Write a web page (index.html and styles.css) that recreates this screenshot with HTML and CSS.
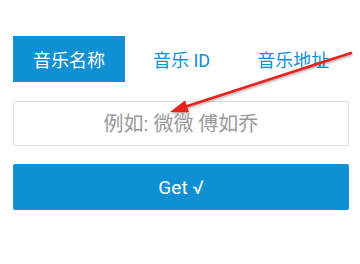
FILE: index.html
```html
<!DOCTYPE html>
<html lang="zh-CN">
<head>
    <meta charset="UTF-8">
    <meta name="viewport" content="width=device-width, initial-scale=1.0">
    <title>音乐搜索</title>
    <link rel="stylesheet" href="styles.css">
</head>
<body>
<div class="panel">
    <ul class="tabs">
        <li class="active">音乐名称</li>
        <li>音乐 ID</li>
        <li>音乐地址</li>
    </ul>
    <input class="field" type="text" placeholder="例如: 微微 傅如乔">
    <button class="get">Get √</button>
</div>

<svg class="arrow" width="360" height="264" viewBox="0 0 360 264">
    <defs>
        <filter id="shade" x="-10%" y="-10%" width="120%" height="130%">
            <feDropShadow dx="0" dy="1.5" stdDeviation="1" flood-color="#000" flood-opacity="0.35"/>
        </filter>
    </defs>
    <g filter="url(#shade)">
        <line x1="351" y1="53" x2="186" y2="106.5" stroke="#e8211b" stroke-width="2.5" stroke-linecap="round"/>
        <polygon points="170,112 185,100.5 189,112.3" fill="#e8211b"/>
    </g>
</svg>
</body>
</html>
```

FILE: styles.css
```css
* {
    margin: 0;
    padding: 0;
    box-sizing: border-box;
}

body {
    background: #fff;
    font-family: Roboto, "Noto Sans CJK SC", sans-serif;
    width: 360px;
    height: 264px;
    overflow: hidden;
}

.panel {
    padding: 36px 12px 0 13px;
}

.tabs {
    list-style: none;
    display: flex;
    height: 46px;
    margin-bottom: 19px;
}

.tabs li {
    display: flex;
    align-items: center;
    flex-shrink: 0;
    white-space: nowrap;
    padding: 0 20px;
    margin-right: 7px;
    font-size: 18px;
    color: #0e90d2;
}

.tabs li.active {
    background: #0e90d2;
    color: #fff;
    width: 112px;
    justify-content: center;
    padding: 0;
    margin-right: 8px;
}

.field {
    display: block;
    width: 336px;
    height: 45px;
    border: 1px solid #ddd;
    border-radius: 2px;
    text-align: center;
    font-family: Roboto, "Noto Sans CJK SC", sans-serif;
    font-size: 20px;
    color: #555;
    outline: none;
}

.field::placeholder {
    color: #999;
}

.get {
    display: block;
    width: 336px;
    height: 46px;
    margin-top: 18px;
    border: none;
    border-radius: 2px;
    background: #0e90d2;
    color: #fff;
    font-family: Roboto, "Noto Sans CJK SC", sans-serif;
    font-size: 19px;
    cursor: pointer;
}

.arrow {
    position: absolute;
    left: 0;
    top: 0;
    pointer-events: none;
}
```
